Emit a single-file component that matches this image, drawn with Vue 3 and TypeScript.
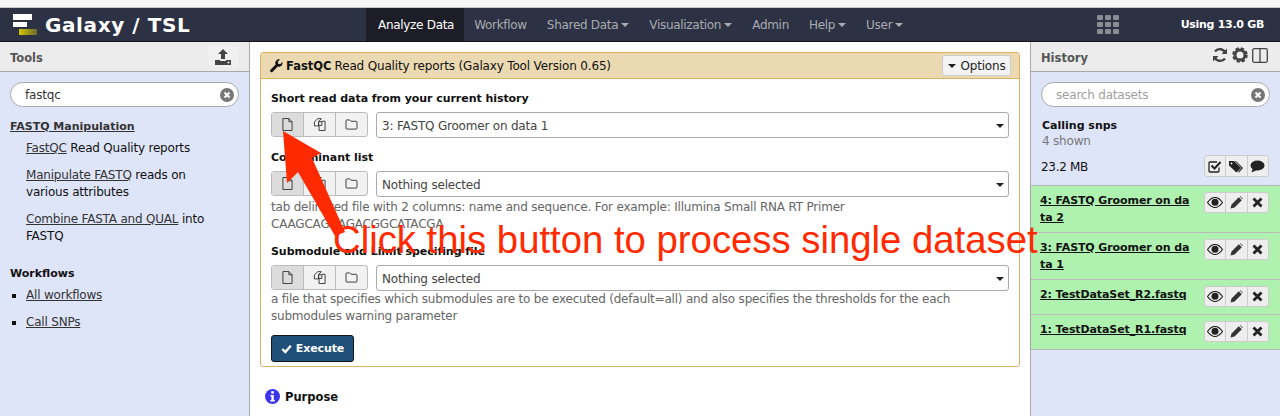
<script setup lang="ts">
const nav = [
  { label: 'Analyze Data', active: true },
  { label: 'Workflow' },
  { label: 'Shared Data', caret: true },
  { label: 'Visualization', caret: true },
  { label: 'Admin' },
  { label: 'Help', caret: true },
  { label: 'User', caret: true },
]
const params = [
  { title: 'Short read data from your current history', value: '3: FASTQ Groomer on data 1', help: [] as string[] },
  {
    title: 'Contaminant list',
    value: 'Nothing selected',
    help: ['tab delimited file with 2 columns: name and sequence. For example: Illumina Small RNA RT Primer', 'CAAGCAGAAGACGGCATACGA'],
  },
  {
    title: 'Submodule and Limit specifing file',
    value: 'Nothing selected',
    help: ['a file that specifies which submodules are to be executed (default=all) and also specifies the thresholds for the each', 'submodules warning parameter'],
  },
]
const datasets = [
  { name: '4: FASTQ Groomer on data 2', tall: true },
  { name: '3: FASTQ Groomer on data 1', tall: true },
  { name: '2: TestDataSet_R2.fastq', tall: false },
  { name: '1: TestDataSet_R1.fastq', tall: false },
]
const grid = Array.from({ length: 9 }, (_, i) => i)
</script>

<template>
  <div class="page">
    <div class="chrome"></div>
    <header class="nav">
      <div class="brand">
        <div class="logo"><i class="l1"></i><i class="l2"></i><i class="l3"></i></div>
        <span class="brand-text">Galaxy / TSL</span>
      </div>
      <nav class="menu">
        <a v-for="n in nav" :key="n.label" class="menu-item" :class="{ active: n.active }">
          {{ n.label }}<i v-if="n.caret" class="caret"></i>
        </a>
      </nav>
      <div class="grid-icon"><i v-for="g in grid" :key="g"></i></div>
      <div class="quota">Using 13.0 GB</div>
    </header>

    <main class="main">
      <aside class="panel left">
        <div class="panel-head">
          <span>Tools</span>
          <span class="upload">
            <svg width="20" height="18" viewBox="0 0 20 18"><path d="M10 1l5 5h-3v5H8V6H5z" fill="#444" /><path d="M2 12h5v1h6v-1h5v5H2z" fill="#444" /><circle cx="15.5" cy="14.5" r="1" fill="#eee" /></svg>
          </span>
        </div>
        <div class="panel-body">
          <div class="search">
            <span class="search-text">fastqc</span>
            <svg class="clear" width="14" height="14" viewBox="0 0 14 14"><circle cx="7" cy="7" r="7" fill="#777" /><path d="M4.5 4.5l5 5m0-5l-5 5" stroke="#fff" stroke-width="2" /></svg>
          </div>
          <div class="section"><a>FASTQ Manipulation</a></div>
          <div class="tool"><a>FastQC</a> Read Quality reports</div>
          <div class="tool"><a>Manipulate FASTQ</a> reads on<br />various attributes</div>
          <div class="tool"><a>Combine FASTA and QUAL</a> into<br />FASTQ</div>
          <div class="wf-title">Workflows</div>
          <ul class="wf">
            <li><a>All workflows</a></li>
            <li><a>Call SNPs</a></li>
          </ul>
        </div>
      </aside>

      <section class="center">
        <div class="card">
          <div class="card-head">
            <svg width="14" height="14" viewBox="0 0 16 16"><path d="M15.5 4.5a4.2 4.2 0 0 1-5.5 4L4.2 14.6a1.6 1.6 0 0 1-2.4 0 1.6 1.6 0 0 1-.1-2.3L7.600 6.400A4.200 4.200 0 0 1 12.600.6L10 3.200l.5 2.300 2.300.6L15.200 3.400c.2.3.3.7.3 1.100z" fill="#111" /></svg>
            <b>FastQC</b>
            <span class="tool-title">Read Quality reports (Galaxy Tool Version 0.65)</span>
            <button class="options"><i class="caret dark"></i>Options</button>
          </div>
          <div class="card-body">
            <div v-for="p in params" :key="p.title" class="param">
              <div class="label">{{ p.title }}</div>
              <div class="row">
                <div class="btns">
                  <span class="b on"><svg width="11" height="13" viewBox="0 0 12 14"><path d="M1 .5h6.500L11 4v9.500H1zM7.500.5V4H11" fill="none" stroke="#333" /></svg></span>
                  <span class="b"><svg width="13" height="13" viewBox="0 0 14 14"><path d="M5 .7h4L6 4v4.500H1.500V4.300zM9.500 3.500h3.500v10H6.500V8" fill="none" stroke="#333" /><path d="M6 4h3.500v4H6z" fill="none" stroke="#333" /></svg></span>
                  <span class="b"><svg width="13" height="11" viewBox="0 0 14 12"><path d="M1 2a1 1 0 0 1 1-1h3l1.500 1.500H12a1 1 0 0 1 1 1V10a1 1 0 0 1-1 1H2a1 1 0 0 1-1-1z" fill="none" stroke="#333" /></svg></span>
                </div>
                <div class="select">{{ p.value }}<i class="caret dark sel"></i></div>
              </div>
              <div v-if="p.help.length" class="help"><div v-for="h in p.help" :key="h">{{ h }}</div></div>
            </div>
            <button class="execute">
              <svg width="11" height="10" viewBox="0 0 11 10"><path d="M1.300 5l3 3 5.500-6.300" fill="none" stroke="#fff" stroke-width="2.400" /></svg>
              Execute
            </button>
          </div>
        </div>
        <div class="purpose">
          <svg width="15" height="15" viewBox="0 0 15 15"><circle cx="7.500" cy="7.500" r="7.500" fill="#3b34e8" /><rect x="6.200" y="2.200" width="2.600" height="2.400" fill="#fff" /><path d="M5.400 6h3.400v5h1v1.500H5.400V11h1V7.500h-1z" fill="#fff" /></svg>
          <b>Purpose</b>
        </div>
      </section>

      <aside class="panel right">
        <div class="panel-head">
          <span>History</span>
          <span class="hist-icons">
            <svg width="16" height="16" viewBox="0 0 16 16"><path d="M13.500 6.500A6 6 0 0 0 3 4.500M2.500 9.500A6 6 0 0 0 13 11.500" fill="none" stroke="#444" stroke-width="2.400" /><path d="M15 1.500V7H9.500zM1 14.500V9h5.500z" fill="#444" /></svg>
            <svg width="16" height="16" viewBox="0 0 16 16"><circle cx="8" cy="8" r="5" fill="none" stroke="#444" stroke-width="3" /><circle cx="8" cy="8" r="6.300" fill="none" stroke="#444" stroke-width="3" stroke-dasharray="3 1.950" /></svg>
            <svg width="16" height="15" viewBox="0 0 16 15"><rect x=".7" y=".7" width="14.600" height="13.600" rx="1.500" fill="none" stroke="#444" stroke-width="1.300" /><path d="M8 1v13" stroke="#444" stroke-width="1.300" /></svg>
          </span>
        </div>
        <div class="panel-body hist">
          <div class="search">
            <span class="search-text muted">search datasets</span>
            <svg class="clear" width="14" height="14" viewBox="0 0 14 14"><circle cx="7" cy="7" r="7" fill="#777" /><path d="M4.500 4.500l5 5m0-5l-5 5" stroke="#fff" stroke-width="2" /></svg>
          </div>
          <div class="hist-name">Calling snps</div>
          <div class="hist-count">4 shown</div>
          <div class="hist-size">
            <span>23.2 MB</span>
            <div class="tri small">
              <span><svg width="14" height="13" viewBox="0 0 14 13"><path d="M11 7.500V11a1 1 0 0 1-1 1H2a1 1 0 0 1-1-1V3a1 1 0 0 1 1-1h7" fill="none" stroke="#222" stroke-width="1.300" /><path d="M3.500 5.500l3 3L12.500 2" fill="none" stroke="#222" stroke-width="2" /></svg></span>
              <span><svg width="16" height="13" viewBox="0 0 16 13"><path d="M1 1h5l7 7-4.500 4.500L1 5.500z" fill="#222" /><path d="M8 1l7 7-4 4.500-1-.5L13.500 8 7 1z" fill="#222" /><circle cx="3.500" cy="3.500" r="1" fill="#eee" /></svg></span>
              <span><svg width="15" height="13" viewBox="0 0 15 13"><ellipse cx="7.500" cy="5.500" rx="7" ry="5" fill="#222" /><path d="M3 8l-1.500 4.500L7 10z" fill="#222" /></svg></span>
            </div>
          </div>
          <div v-for="d in datasets" :key="d.name" class="ds" :class="{ tall: d.tall }">
            <a class="ds-name">{{ d.name }}</a>
            <div class="tri">
              <span><svg width="16" height="11" viewBox="0 0 16 11"><path d="M.5 5.500C3 2 5.500.5 8 .5s5 1.500 7.500 5C13 9 10.500 10.500 8 10.500S3 9 .5 5.500z" fill="none" stroke="#222" stroke-width="1.200" /><circle cx="8" cy="5.200" r="3.500" fill="#222" /></svg></span>
              <span><svg width="13" height="13" viewBox="0 0 13 13"><path d="M.5 12.500l1-4L8.800 1.200l3 3L4.500 11.500zM9.800.5l.6-.3 2.400 2.400-.3.600z" fill="#333" /></svg></span>
              <span><svg width="11" height="11" viewBox="0 0 11 11"><path d="M1.500 1.500l8 8m0-8l-8 8" stroke="#222" stroke-width="2.800" /></svg></span>
            </div>
          </div>
        </div>
      </aside>
    </main>

    <svg class="arrow" width="80" height="120" viewBox="0 0 80 120"><polygon points="3,11 41,33 32,38 65,112 55,116 18,52 7,63" fill="#ff2a00" /></svg>
    <div class="callout">Click this button to process single dataset</div>
  </div>
</template>

<style>
html, body { margin: 0; padding: 0; background: #fff; }
</style>

<style scoped>
.page { position: relative; width: 1280px; height: 416px; overflow: hidden; font-family: "DejaVu Sans", sans-serif; font-size: 12px; letter-spacing: -0.2px; color: #111; display: flex; flex-direction: column; }
.chrome { height: 7px; background: #f6f6f6; border-bottom: 1px solid #c8c8c8; flex: none; }
.nav { height: 33px; background: #2c3143; border-bottom: 1px solid #10131c; display: flex; align-items: center; flex: none; }
.brand { width: 366px; display: flex; align-items: center; flex: none; }
.logo { width: 32px; margin-left: 13px; height: 21px; position: relative; display: flex; flex-direction: column; gap: 2px; }
.logo i { display: block; height: 6px; background: #fff; }
.logo .l1 { width: 19px; }
.logo .l2 { width: 14px; }
.logo .l3 { width: 18px; margin-left: 6px; background: linear-gradient(90deg, #d9c400, #6a6a30); }
.brand-text { font-weight: 700; font-size: 20px; letter-spacing: 0.6px; color: #fff; }
.menu { display: flex; height: 100%; letter-spacing: -0.3px; }
.menu-item { color: #a9abb2; display: flex; align-items: center; padding: 0 10px; }
.menu-item.active { background: #1c1d26; color: #fff; padding: 0 10px 0 12px; }
.caret { display: inline-block; width: 0; height: 0; border-left: 4px solid transparent; border-right: 4px solid transparent; border-top: 4px solid #a9abb2; margin-left: 3px; }
.caret.dark { border-top-color: #222; margin: 0 5px 0 0; }
.caret.sel { position: absolute; right: 4px; top: 11px; margin: 0; }
.grid-icon { margin-left: auto; width: 22px; display: grid; grid-template-columns: repeat(3, 6px); gap: 2px; flex: none; }
.grid-icon i { display: block; height: 5px; background: #8a8c92; border-radius: 1px; }
.quota { margin-left: 62px; margin-right: 16px; color: #fff; font-weight: 700; font-size: 11px; letter-spacing: -0.3px; }
.main { flex: 1; display: flex; min-height: 0; }
.panel { width: 249px; flex: none; display: flex; flex-direction: column; }
.panel.left { border-right: 1px solid #a8a8a8; }
.panel.right { border-left: 1px solid #a8a8a8; }
.panel-head { height: 29px; box-sizing: content-box; flex: none; background: #ececec; border-bottom: 1px solid #a8a8a8; display: flex; align-items: center; justify-content: space-between; padding: 0 10px; font-weight: 700; color: #555; font-size: 11.500px; letter-spacing: 0; }
.panel-head > span:first-child { margin-top: 2px; }
.upload { background: #f0f0f0; width: 30px; height: 20px; display: flex; align-items: center; justify-content: center; margin-right: 1px; border-radius: 2px; }
.hist-icons { display: flex; gap: 4px; align-items: center; margin: -3px 2px 0 0; }
.panel-body { flex: 1; background: #dfe5f9; padding: 10px 10px 0; }
.search { height: 23px; border: 1px solid #aaa; border-radius: 13px; background: #fff; display: flex; align-items: center; justify-content: space-between; padding: 0 4px 0 14px; color: #333; }
.search-text.muted { color: #a0a0a0; }
.section { margin-top: 13px; font-weight: 700; color: #333; font-size: 11px; letter-spacing: 0; }
.section a, .tool a, .wf a { text-decoration: underline; color: #333; }
.tool { margin: 10px 0 0 16px; line-height: 17px; }
.section + .tool { margin-top: 7px; }
.wf-title { margin-top: 22px; font-weight: 700; font-size: 11px; letter-spacing: 0; }
.wf { list-style: square; margin: 7px 0 0; padding: 0 0 0 16px; }
.wf li { margin-bottom: 10px; line-height: 17px; }
.center { flex: 1; min-width: 0; padding: 10px 10px 0; }
.card { border: 1px solid #dcb461; border-radius: 3px; }
.card-head { height: 25px; background: #ebd9b2; border-bottom: 1px solid #dcb461; display: flex; align-items: center; padding: 0 8px; gap: 3px; }
.card-head b { font-weight: 700; font-size: 11.500px; letter-spacing: 0; }
.tool-title { letter-spacing: -0.16px; }
.options { margin-left: auto; height: 21px; width: 69px; border: 1px solid #ccc; border-radius: 3px; background: #f3f3f3; font: inherit; letter-spacing: -0.2px; color: #222; padding: 0; display: flex; align-items: center; justify-content: center; }
.card-body { padding: 11px 10px 4px; }
.param { margin-bottom: 10px; }
.param:first-of-type { margin-bottom: 11px; }
.param:last-of-type { margin-bottom: 10px; }
.param:last-of-type .help { margin-top: 0; }
.label { font-weight: 700; font-size: 11px; letter-spacing: -0.05px; line-height: 17px; margin-bottom: 5px; }
.row { display: flex; gap: 8px; }
.btns { width: 97px; height: 25px; display: flex; border: 1px solid #bbb; border-radius: 3px; box-sizing: border-box; background: #f2f2f2; flex: none; }
.b { flex: 1; display: flex; align-items: center; justify-content: center; border-left: 1px solid #bbb; }
.b:first-child { border-left: 0; }
.b.on { background: #dcdcdc; }
.select { flex: 1; height: 26px; box-sizing: border-box; border: 1px solid #aaa; border-radius: 3px; background: #fff; padding: 0 5px; line-height: 26px; color: #444; position: relative; }
.help { color: #666; line-height: 17px; margin-top: 2px; }
.execute { display: flex; align-items: center; gap: 4px; height: 27px; width: 83px; justify-content: center; background: #20507a; color: #fff; font: inherit; font-weight: 700; font-size: 11px; letter-spacing: -0.1px; border: 1px solid #10171f; border-radius: 3px; padding: 0; }
.purpose { display: flex; align-items: center; gap: 5px; margin: 22px 0 0 5px; font-size: 11.500px; letter-spacing: 0; }
.purpose b { font-weight: 700; }
.panel-body.hist { padding: 10px 0 0; }
.hist .search { margin: 0 10px; }
.hist-name { margin: 10px 10px 0 11px; font-weight: 700; font-size: 11px; letter-spacing: 0; line-height: 17px; }
.hist-count { margin: 0 10px 0 11px; color: #777; line-height: 15px; }
.hist-size { display: flex; justify-content: space-between; align-items: center; margin: 7px 11px 7px 10px; height: 22px; letter-spacing: -0.3px; }
.hist-size .tri { height: 22px; margin-top: -2px; }
.tri { display: flex; width: 65px; height: 21px; box-sizing: border-box; border: 1px solid #ccc; border-radius: 3px; background: #eee; flex: none; }
.tri span { flex: 1; display: flex; align-items: center; justify-content: center; border-left: 1px solid #ccc; }
.tri span:first-child { border-left: 0; }
.ds { display: flex; justify-content: space-between; align-items: flex-start; background: #aff1af; border-top: 1px solid #bbb; padding: 6px 11px 6px 9px; height: 22px; }
.ds.tall { height: 34px; }
.ds:last-child { border-bottom: 1px solid #bbb; }
.ds-name { width: 152px; word-break: break-all; font-weight: 700; font-size: 11px; letter-spacing: -0.1px; text-decoration: underline; line-height: 17px; }
.arrow { position: absolute; left: 280px; top: 120px; }
.callout { position: absolute; left: 333px; top: 218px; font-family: "Liberation Sans", sans-serif; font-size: 38.300px; line-height: 44px; letter-spacing: 0; color: #ff2a00; white-space: nowrap; }
</style>
